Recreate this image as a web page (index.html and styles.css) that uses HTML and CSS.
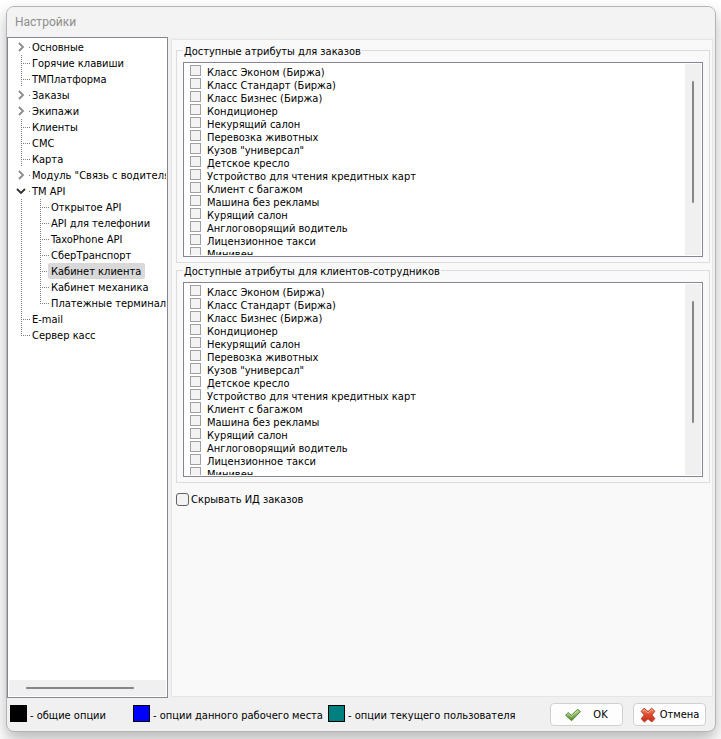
FILE: index.html
```html
<!DOCTYPE html>
<html lang="ru">
<head>
<meta charset="utf-8">
<meta name="viewport" content="width=device-width, initial-scale=1">
<title>Настройки</title>
<link rel="stylesheet" href="styles.css">
</head>
<body>
<div class="window">
  <header class="titlebar"><h1>Настройки</h1></header>
  <main class="body">
    <nav class="tree" aria-label="Разделы">
      <ul class="nodes">
        <li><div class="node folder"><svg class="chevron" viewBox="0 0 10 10"><path d="M3 1L7 5L3 9"/></svg><a href="#">Основные</a></div></li>
        <li><div class="node leaf"><a href="#">Горячие клавиши</a></div></li>
        <li><div class="node leaf"><a href="#">ТМПлатформа</a></div></li>
        <li><div class="node folder"><svg class="chevron" viewBox="0 0 10 10"><path d="M3 1L7 5L3 9"/></svg><a href="#">Заказы</a></div></li>
        <li><div class="node folder"><svg class="chevron" viewBox="0 0 10 10"><path d="M3 1L7 5L3 9"/></svg><a href="#">Экипажи</a></div></li>
        <li><div class="node leaf"><a href="#">Клиенты</a></div></li>
        <li><div class="node leaf"><a href="#">СМС</a></div></li>
        <li><div class="node leaf"><a href="#">Карта</a></div></li>
        <li><div class="node folder"><svg class="chevron" viewBox="0 0 10 10"><path d="M3 1L7 5L3 9"/></svg><a href="#">Модуль "Связь с водителями"</a></div></li>
        <li>
          <div class="node folder"><svg class="chevron open" viewBox="0 0 10 10"><path d="M1 3L5 7L9 3"/></svg><a href="#">TM API</a></div>
          <ul class="nodes children">
            <li><div class="node leaf"><a href="#">Открытое API</a></div></li>
            <li><div class="node leaf"><a href="#">API для телефонии</a></div></li>
            <li><div class="node leaf"><a href="#">TaxoPhone API</a></div></li>
            <li><div class="node leaf"><a href="#">СберТранспорт</a></div></li>
            <li><div class="node leaf"><a href="#" class="selected" aria-current="page">Кабинет клиента</a></div></li>
            <li><div class="node leaf"><a href="#">Кабинет механика</a></div></li>
            <li><div class="node leaf last"><a href="#">Платежные терминалы</a></div></li>
          </ul>
        </li>
        <li><div class="node leaf"><a href="#">E-mail</a></div></li>
        <li><div class="node leaf last"><a href="#">Сервер касс</a></div></li>
      </ul>
      <div class="hscroll"><div class="thumb"></div></div>
    </nav>
    <section class="panel">
      <fieldset class="group">
        <legend>Доступные атрибуты для заказов</legend>
        <div class="list">
          <div class="items">
            <label><input type="checkbox">Класс Эконом (Биржа)</label>
            <label><input type="checkbox">Класс Стандарт (Биржа)</label>
            <label><input type="checkbox">Класс Бизнес (Биржа)</label>
            <label><input type="checkbox">Кондиционер</label>
            <label><input type="checkbox">Некурящий салон</label>
            <label><input type="checkbox">Перевозка животных</label>
            <label><input type="checkbox">Кузов "универсал"</label>
            <label><input type="checkbox">Детское кресло</label>
            <label><input type="checkbox">Устройство для чтения кредитных карт</label>
            <label><input type="checkbox">Клиент с багажом</label>
            <label><input type="checkbox">Машина без рекламы</label>
            <label><input type="checkbox">Курящий салон</label>
            <label><input type="checkbox">Англоговорящий водитель</label>
            <label><input type="checkbox">Лицензионное такси</label>
            <label><input type="checkbox">Минивен</label>
          </div>
          <div class="vscroll"><div class="thumb"></div></div>
        </div>
      </fieldset>
      <fieldset class="group">
        <legend>Доступные атрибуты для клиентов-сотрудников</legend>
        <div class="list">
          <div class="items">
            <label><input type="checkbox">Класс Эконом (Биржа)</label>
            <label><input type="checkbox">Класс Стандарт (Биржа)</label>
            <label><input type="checkbox">Класс Бизнес (Биржа)</label>
            <label><input type="checkbox">Кондиционер</label>
            <label><input type="checkbox">Некурящий салон</label>
            <label><input type="checkbox">Перевозка животных</label>
            <label><input type="checkbox">Кузов "универсал"</label>
            <label><input type="checkbox">Детское кресло</label>
            <label><input type="checkbox">Устройство для чтения кредитных карт</label>
            <label><input type="checkbox">Клиент с багажом</label>
            <label><input type="checkbox">Машина без рекламы</label>
            <label><input type="checkbox">Курящий салон</label>
            <label><input type="checkbox">Англоговорящий водитель</label>
            <label><input type="checkbox">Лицензионное такси</label>
            <label><input type="checkbox">Минивен</label>
          </div>
          <div class="vscroll"><div class="thumb"></div></div>
        </div>
      </fieldset>
      <label class="option"><input type="checkbox">Скрывать ИД заказов</label>
    </section>
  </main>
  <footer class="footer">
    <div class="legend common"><span class="swatch"></span>- общие опции</div>
    <div class="legend workplace"><span class="swatch"></span>- опции данного рабочего места</div>
    <div class="legend user"><span class="swatch"></span>- опции текущего пользователя</div>
    <div class="actions">
      <button type="button" class="ok">
        <svg width="16" height="16" viewBox="0 0 16 16"><defs><linearGradient id="g" x1="0" y1="0" x2="0" y2="1"><stop offset="0" stop-color="#b5d98a"/><stop offset="1" stop-color="#4f8a28"/></linearGradient></defs><path d="M.6 8.2L3.4 5.6L6.2 8.4L12.6 2.4L15.5 4.6L6.6 13.7Z" fill="url(#g)" stroke="#55803a" stroke-linejoin="round"/><path d="M2 8.2L3.4 6.9L6.2 9.7L12.7 3.7" fill="none" stroke="#d3eab6" stroke-width=".8"/></svg>
        <span>OK</span>
      </button>
      <button type="button" class="cancel">
        <svg width="16" height="16" viewBox="0 0 16 16"><defs><linearGradient id="r" x1="0" y1="0" x2="0" y2="1"><stop offset="0" stop-color="#f58a62"/><stop offset=".5" stop-color="#dd4a2c"/><stop offset="1" stop-color="#c22d1c"/></linearGradient></defs><path d="M4.2 1.2L8 4.6L11.6 1.2L14.9 4.3L11.8 8L14.9 11.6L11.8 14.9L8 11.7L4.4 14.9L1.2 11.8L4.3 8L1.2 4.3Z" fill="url(#r)" stroke="#b5371f" stroke-linejoin="round"/><path d="M2.6 4.3L4.2 2.6L8 6L11.6 2.6L13.4 4.3" fill="none" stroke="#f9b397" stroke-width=".8"/></svg>
        <span>Отмена</span>
      </button>
    </div>
  </footer>
</div>
</body>
</html>
```

FILE: styles.css
```css
* { box-sizing: border-box; }

body {
  margin: 0;
  min-height: 100vh;
  padding: 6px 5px 7px 6px;
  display: flex;
  background: #fff;
  color: #000;
  font: 11px/13px "DejaVu Sans Condensed", "DejaVu Sans", sans-serif;
  overflow: hidden;
}

ul { margin: 0; padding: 0; list-style: none; }
a { color: inherit; text-decoration: none; }
label { display: flex; align-items: center; white-space: nowrap; }

input[type="checkbox"] {
  appearance: none;
  flex: none;
  margin: 0;
  width: 11px;
  height: 11px;
  border: 1px solid #a0a0a0;
  background: #f3f3f3;
}
input[type="checkbox"]:checked { background: #5a8fd0; }

.window {
  flex: 1;
  min-width: 0;
  display: flex;
  flex-direction: column;
  border: 1px solid #b4b4b4;
  border-radius: 8px;
  background: #f0f0f0;
  box-shadow: 0 8px 16px rgba(0, 0, 0, .28);
  overflow: hidden;
}

.titlebar {
  height: 30px;
  padding: 0 8px;
  display: flex;
  align-items: center;
  background: #f3f3f3;
}
.titlebar h1 {
  margin: 0;
  font: 12px/16px Roboto, "Open Sans", sans-serif;
  color: #8e8e8e;
}

.body { flex: 1; display: flex; gap: 3px; min-height: 0; }

.tree {
  flex: none;
  width: 161px;
  padding: 1px;
  display: flex;
  flex-direction: column;
  justify-content: space-between;
  border: 1px solid #828790;
  background: #fff;
}
.nodes { overflow: hidden; }
.node {
  height: 16px;
  padding-left: 20px;
  display: flex;
  align-items: center;
  white-space: nowrap;
  background-repeat: no-repeat;
}
.node a { padding: 2px 4px 1px 3px; border-radius: 2px; }
.node a.selected { background: #d9d9d9; }
.node.leaf {
  background-image:
    repeating-linear-gradient(#808080 0 1px, transparent 1px 2px),
    repeating-linear-gradient(90deg, #808080 0 1px, transparent 1px 2px);
  background-size: 1px 100%, 9px 1px;
  background-position: 12px 0, 12px 8px;
}
.node.leaf.last { background-size: 1px 9px, 9px 1px; }
.node.folder {
  padding-left: 7px;
  background-image: linear-gradient(#808080, #808080);
  background-size: 1px 1px;
  background-position: 20px 8px;
}
.chevron {
  flex: none;
  width: 10px;
  height: 10px;
  margin-right: 3px;
  fill: none;
  stroke: #8a8a8a;
  stroke-width: 1.8;
}
.chevron.open { stroke: #303030; }
.children {
  padding-left: 19px;
  background: repeating-linear-gradient(#808080 0 1px, transparent 1px 2px) 12px 0 / 1px 100% no-repeat;
}

.thumb { background: #868686; border-radius: 1px; }
.hscroll {
  height: 16px;
  padding: 0 32px 0 17px;
  display: flex;
  align-items: center;
  background: #f0f0f0;
}
.hscroll .thumb { flex: 1; height: 2px; }

.panel {
  flex: 1;
  min-width: 0;
  margin: 2px 2px 1px 0;
  padding: 3px 2px 4px 4px;
  border: 1px solid #e5e5e5;
  background: #f9f9f9;
}
.group {
  margin: 0;
  padding: 4px 6px 5px;
  border: 1px solid #dcdcdc;
  min-width: 0;
}
.group legend { padding: 2px 1px 0; }
.list {
  height: 195px;
  padding: 1px;
  display: flex;
  border: 1px solid #828790;
  background: #fff;
}
.items { flex: 1; padding: 2px 5px 0; overflow: hidden; }
.items label { height: 13px; gap: 6px; }
.items input { margin-bottom: 4px; }
.vscroll {
  width: 16px;
  padding: 17px 0 52px;
  display: flex;
  justify-content: center;
  background: #f0f0f0;
}
.vscroll .thumb { width: 2px; }

.option { display: inline-flex; margin-top: 10px; gap: 2px; }
.option input[type="checkbox"] {
  width: 13px;
  height: 13px;
  border-color: #626262;
  border-radius: 3px;
}

.footer {
  height: 33px;
  padding: 0 9px 0 3px;
  display: flex;
  align-items: center;
}
.footer .legend {
  margin-bottom: 2px;
  display: flex;
  align-items: flex-end;
  gap: 3px;
  white-space: nowrap;
}
.legend.common { width: 123px; }
.legend.workplace { width: 195px; }
.swatch { width: 17px; height: 17px; border: 1px solid #000; }
.common .swatch { background: #000; }
.workplace .swatch { background: #00f; }
.user .swatch { background: #008080; }

.actions { margin-left: auto; display: flex; gap: 10px; }
.actions button {
  width: 73px;
  height: 23px;
  padding: 0;
  display: flex;
  align-items: center;
  justify-content: center;
  gap: 4px;
  border: 1px solid #d0d0d0;
  border-radius: 4px;
  background: #fdfdfd;
  color: #000;
  font: inherit;
}
.actions .ok { gap: 12px; }
```
